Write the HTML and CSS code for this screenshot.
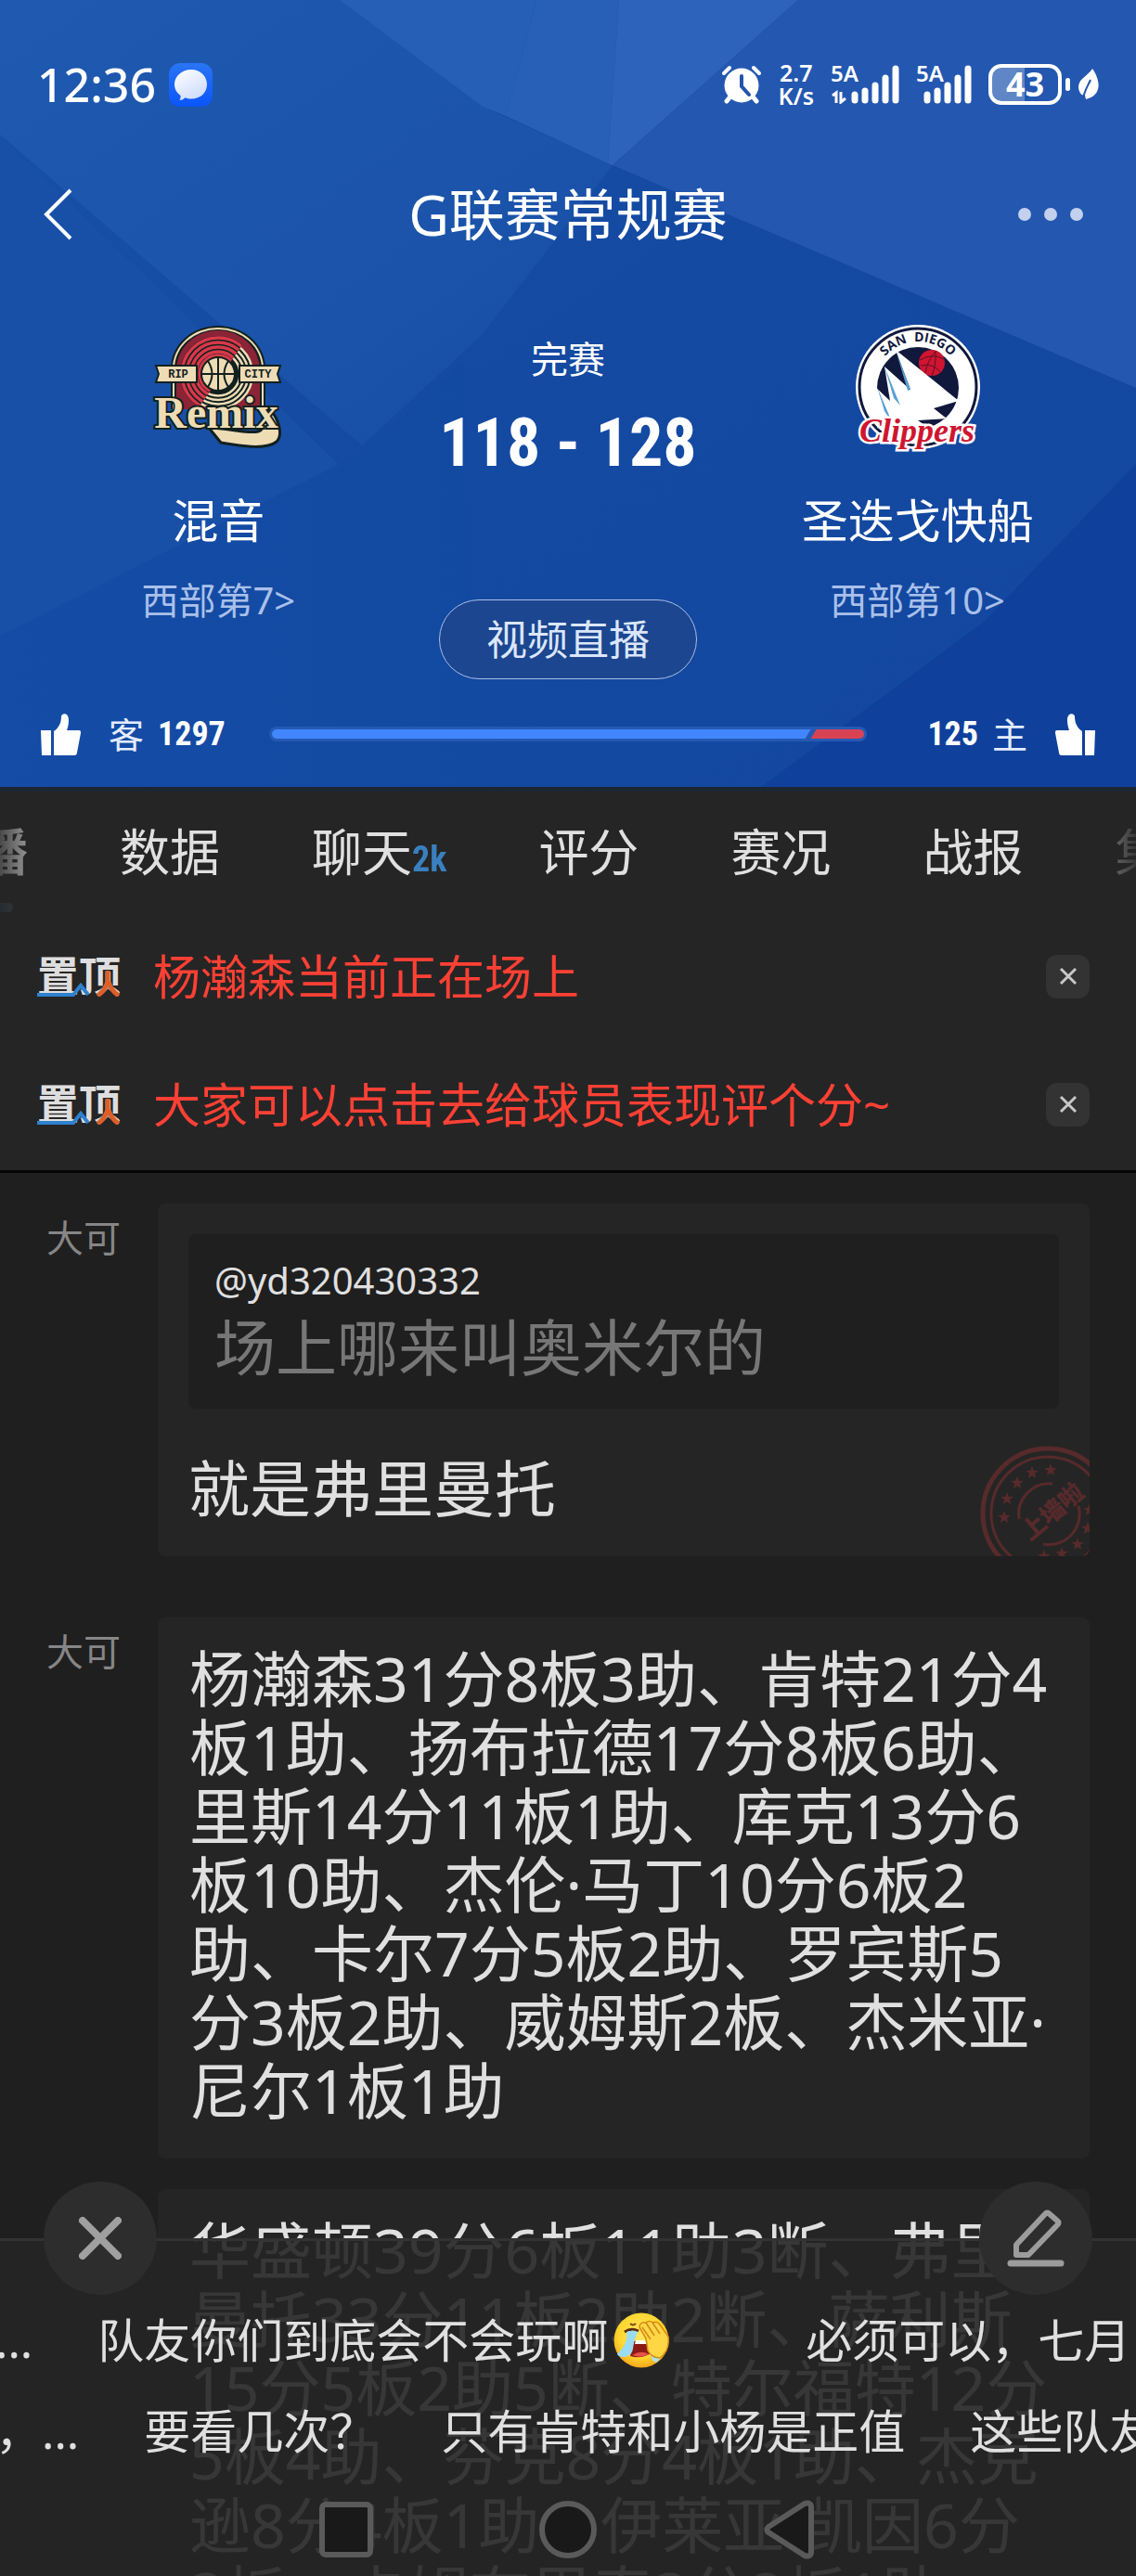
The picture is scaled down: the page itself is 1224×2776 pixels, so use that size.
FILE: index.html
```html
<!DOCTYPE html>
<html lang="zh-CN">
<head>
  <meta charset="UTF-8">
  <meta name="viewport" content="width=device-width, initial-scale=1.0">
  <title>G联赛常规赛</title>
  <link rel="stylesheet" href="styles.css">
</head>
<body>
  <div class="page">
    <header class="header">
      <svg class="header-bg" viewBox="0 0 1224 848" preserveAspectRatio="none" aria-hidden="true">
        <defs>
          <linearGradient id="base" x1="0" y1="0" x2="1" y2="1">
            <stop offset="0" stop-color="#1850a8"/>
            <stop offset=".45" stop-color="#144aa2"/>
            <stop offset="1" stop-color="#1347a0"/>
          </linearGradient>
          <linearGradient id="band" x1="0" y1="0" x2="1" y2="1">
            <stop offset="0" stop-color="#1f59b0"/>
            <stop offset=".6" stop-color="#1b54aa"/>
            <stop offset="1" stop-color="#154ca4"/>
          </linearGradient>
          <linearGradient id="fade" x1="0" y1="0" x2="1" y2="0">
            <stop offset="0" stop-color="#154ca6"/>
            <stop offset="1" stop-color="#1249a1"/>
          </linearGradient>
        </defs>
        <rect width="1224" height="848" fill="url(#base)"/>
        <path d="M0 145L385 520 0 685z" fill="#1850a8"/>
        <path d="M0 0H366L520 115 660 178 520 360 390 480 0 145z" fill="url(#band)"/>
        <path d="M0 685L385 490 500 390 520 848H0z" fill="url(#fade)"/>
        <path d="M366 0H578L545 125 520 115z" fill="#265fb6"/>
        <path d="M578 0H667L655 176 545 125z" fill="#2860b8"/>
        <path d="M667 0H860L660 178 655 176z" fill="#2e63bc"/>
        <path d="M860 0H1224V418L660 178z" fill="#2357b0"/>
        <path d="M1224 500L1060 670 820 848H1224z" fill="#0f419c"/>
      </svg>

      <div class="status">
        <div class="status-left">
          <span class="clock">12:36</span>
          <svg width="47" height="47" viewBox="0 0 47 47" aria-hidden="true">
            <defs>
              <linearGradient id="msg" x1="0" y1="0" x2="0" y2="1">
                <stop offset="0" stop-color="#2a74f5"/>
                <stop offset="1" stop-color="#0a55fb"/>
              </linearGradient>
              <linearGradient id="bubble" x1="0" y1="0" x2=".6" y2="1">
                <stop offset="0" stop-color="#fff"/>
                <stop offset="1" stop-color="#cfdcfb"/>
              </linearGradient>
            </defs>
            <rect width="47" height="47" rx="12" fill="url(#msg)"/>
            <path d="M24 7c10 0 17 7 17 16s-7 15.500-17 15.500c-2.500 0-4.500-.4-6.500-1.200-1.500 1.700-3.500 2.500-6 2.700 1-1.500 1.300-3.200 1-5C8.500 32 6 28 6 23 6 14 14 7 24 7z" fill="url(#bubble)"/>
          </svg>
        </div>
        <div class="status-right">
          <svg width="44" height="42" viewBox="0 0 44 42" aria-hidden="true">
            <g fill="none" stroke="#fff" stroke-linecap="round">
              <path d="M3 9l6-6M41 9l-6-6" stroke-width="4"/>
              <path d="M10 34l-4 5M34 34l4 5" stroke-width="5"/>
            </g>
            <circle cx="22" cy="22" r="18.500" fill="#fff"/>
            <path d="M22 12v11l8 9" fill="none" stroke="#2353ac" stroke-width="4" stroke-linecap="round"/>
          </svg>
          <span class="speed">2.7<br>K/s</span>
          <div class="signal">
            <span>5A</span>
            <svg width="74" height="42" viewBox="0 0 74 42" aria-hidden="true">
              <path d="M2 33l4-3v11M11 29v11l5-4" fill="none" stroke="#fff" stroke-width="3"/>
              <path d="M26 32v6M37 28v10M48 22v16M59 14v24M70 4v34" fill="none" stroke="#fff" stroke-width="7" stroke-linecap="round"/>
            </svg>
          </div>
          <div class="signal">
            <span>5A</span>
            <svg width="60" height="42" viewBox="0 0 60 42" aria-hidden="true">
              <path d="M12 32v6M23 28v10M34 22v16M45 14v24M56 4v34" fill="none" stroke="#fff" stroke-width="7" stroke-linecap="round"/>
            </svg>
          </div>
          <div class="battery"><span>43</span></div>
          <svg width="22" height="34" viewBox="0 0 22 34" aria-hidden="true">
            <path d="M15 0c5 7 8 16 6 22-2 7-7 9-13 11l-1-4C3 29 0 25 0 19 1 10 10 8 15 0z" fill="#fff"/>
            <path d="M13 12C10 19 6 24 5 33" fill="none" stroke="#2353ac" stroke-width="2"/>
          </svg>
        </div>
      </div>

      <div class="nav">
        <button class="icon-btn back" aria-label="返回">
          <svg width="34" height="56" viewBox="0 0 34 56"><path d="M30 2L4 28l26 26" fill="none" stroke="#fff" stroke-width="4"/></svg>
        </button>
        <h1>G联赛常规赛</h1>
        <button class="icon-btn more" aria-label="更多">
          <svg width="72" height="16" viewBox="0 0 72 16" fill="#c3d0ee"><circle cx="8" cy="8" r="7"/><circle cx="36" cy="8" r="7"/><circle cx="64" cy="8" r="7"/></svg>
        </button>
      </div>

      <div class="match">
        <div class="team">
          <svg class="logo" viewBox="0 0 136 136" role="img" aria-label="Rip City Remix">
            <defs>
              <clipPath id="redPart"><path d="M0 0H110L40 100 0 136z"/></clipPath>
            </defs>
            <path d="M17 92V48a51 46 0 0 1 102 0v44z" fill="#12211f"/>
            <path d="M19 92V48a49 44 0 0 1 98 0v44z" fill="#eedcb5"/>
            <path d="M21 92V48a47 42 0 0 1 94 0v44z" fill="#12211f"/>
            <path d="M23 92V50a45 43 0 0 1 90 0v42z" fill="#8b2437"/>
            <circle cx="68" cy="54" r="38" fill="#12211f"/>
            <g fill="none" stroke="#eedcb5" stroke-width="2.500">
              <circle cx="68" cy="54" r="37"/><circle cx="68" cy="54" r="32.500"/><circle cx="68" cy="54" r="28"/><circle cx="68" cy="54" r="23.500"/>
            </g>
            <g clip-path="url(#redPart)">
              <circle cx="68" cy="54" r="41" fill="#12211f"/>
              <g fill="none" stroke="#d8384a" stroke-width="3.400">
                <circle cx="68" cy="54" r="39"/><circle cx="68" cy="54" r="34"/><circle cx="68" cy="54" r="29"/><circle cx="68" cy="54" r="24"/><circle cx="68" cy="54" r="20"/>
              </g>
            </g>
            <circle cx="68" cy="54" r="18" fill="#eedcb5" stroke="#12211f" stroke-width="2"/>
            <path d="M68 36v36M50 54h36M57 40q9 14 0 28M79 40q-9 14 0 28" fill="none" stroke="#12211f" stroke-width="2"/>
            <path d="M1 45h44v18H1l3-9zM135 45H91v18h44l-3-9z" fill="#eedcb5" stroke="#12211f" stroke-width="2"/>
            <text x="25" y="58" class="remix-small">RIP</text>
            <text x="111" y="58" class="remix-small">CITY</text>
            <path d="M124 92c10 12 14 28 7 35-10 8-32 6-60 1L58 112c20 0 43 7 53 4 7-2 6-9 4-19z" fill="#eedcb5" stroke="#12211f" stroke-width="3"/>
            <text x="66" y="112" class="remix-word">Remix</text>
          </svg>
          <h2>混音</h2>
          <a href="#">西部第7&gt;</a>
        </div>

        <div class="middle">
          <span class="state">完赛</span>
          <strong class="score">118 - 128</strong>
          <button class="live-btn">视频直播</button>
        </div>

        <div class="team">
          <svg class="logo" viewBox="0 0 136 136" role="img" aria-label="San Diego Clippers">
            <defs>
              <path id="arc" d="M21 66a47 47 0 0 1 94 0"/>
              <clipPath id="inner"><circle cx="68" cy="68" r="45"/></clipPath>
            </defs>
            <circle cx="68" cy="68" r="67" fill="#fff"/>
            <circle cx="68" cy="68" r="63" fill="none" stroke="#10183c" stroke-width="3"/>
            <circle cx="68" cy="69" r="44" fill="#10183c"/>
            <circle cx="83" cy="42" r="14" fill="#cf1530"/>
            <path d="M70 39q14-8 26-1M76 53q2-14 12-24M83 56q5-12 4-27M71 45q14-3 21 7" fill="none" stroke="#5e1028"/>
            <g clip-path="url(#inner)">
              <path d="M44 28L112 83 85 91 99 102 68 104 78 111 20 113V66L38 83 32 46 60 71z" fill="#fff"/>
              <path d="M44 28l16 43-3 1zM32 46l17 42-7-8zM24 68l17 40-9-14z" fill="#5b9fd4"/>
            </g>
            <text><textPath href="#arc" startOffset="50%" class="sd-text">SAN&#160; DIEGO</textPath></text>
            <text x="67" y="127" class="clip-word">Clippers</text>
          </svg>
          <h2>圣迭戈快船</h2>
          <a href="#">西部第10&gt;</a>
        </div>
      </div>

      <div class="vote">
        <div class="vote-side">
          <button class="icon-btn" aria-label="支持客队">
            <svg width="43" height="45" viewBox="0 0 43 45" fill="#fff"><path d="M0 18h11v27H1zM14 45V19C20 15 22 9 22 3c1-4 8-4 8 4 0 5-1 8-2 11h13c2 0 2 1 2 3l-4 21c0 2-1 3-3 3z"/></svg>
          </button>
          <span class="vote-name">客</span>
          <strong>1297</strong>
        </div>
        <div class="vote-bar">
          <div class="vote-away" style="width: 91%"></div>
          <div class="vote-home"></div>
        </div>
        <div class="vote-side vote-right">
          <strong>125</strong>
          <span class="vote-name">主</span>
          <button class="icon-btn" aria-label="支持主队">
            <svg width="43" height="45" viewBox="0 0 43 45" fill="#fff"><path d="M43 18H32v27h10zM29 45V19C23 15 21 9 21 3c-1-4-8-4-8 4 0 5 1 8 2 11H2c-2 0-2 1-2 3l4 21c0 2 1 3 3 3z"/></svg>
          </button>
        </div>
      </div>
    </header>

    <div class="panel">
      <nav class="tabs">
        <a href="#" class="active">播</a>
        <a href="#">数据</a>
        <a href="#">聊天<span class="count">2k</span></a>
        <a href="#">评分</a>
        <a href="#">赛况</a>
        <a href="#">战报</a>
        <a href="#">集</a>
      </nav>

      <div class="pinned">
        <span class="badge">置顶
          <svg viewBox="0 0 90 44" aria-hidden="true"><path d="M0 42h39l8-10 8 10" fill="none" stroke="#2f80cf" stroke-width="4"/><path d="M76 16v12q-3 10-11 15M77 28q3 10 11 15" fill="none" stroke="#d9602a" stroke-width="5"/></svg>
        </span>
        <a href="#">杨瀚森当前正在场上</a>
        <button class="close" aria-label="关闭"><svg width="20" height="20" viewBox="0 0 20 20"><path d="M2 2l16 16M18 2L2 18" stroke="#c8c8c8" stroke-width="3"/></svg></button>
      </div>
      <div class="pinned">
        <span class="badge">置顶
          <svg viewBox="0 0 90 44" aria-hidden="true"><path d="M0 42h39l8-10 8 10" fill="none" stroke="#2f80cf" stroke-width="4"/><path d="M76 16v12q-3 10-11 15M77 28q3 10 11 15" fill="none" stroke="#d9602a" stroke-width="5"/></svg>
        </span>
        <a href="#">大家可以点击去给球员表现评个分~</a>
        <button class="close" aria-label="关闭"><svg width="20" height="20" viewBox="0 0 20 20"><path d="M2 2l16 16M18 2L2 18" stroke="#c8c8c8" stroke-width="3"/></svg></button>
      </div>
    </div>

    <main class="chat">
      <article class="message">
        <span class="author">大可</span>
        <div class="bubbles">
          <div class="bubble with-quote">
            <blockquote>
              <cite>@yd320430332</cite>
              <p>场上哪来叫奥米尔的</p>
            </blockquote>
            <p>就是弗里曼托</p>
            <svg class="stamp" viewBox="0 0 146 146" aria-hidden="true">
              <defs><path id="star" d="M0-7l1.800 4.800 5 .1-4 3.200 1.500 4.900L0 3.200l-4.300 2.800 1.500-4.900-4-3.200 5-.1z"/></defs>
              <g fill="none" stroke="#572a2b">
                <circle cx="73" cy="73" r="70" stroke-width="5"/>
                <circle cx="73" cy="73" r="61" stroke-width="3"/>
                <path d="M42 79a33 33 0 0 1 36-38M106 65a33 33 0 0 1-38 41" stroke-width="3"/>
              </g>
              <g fill="#572a2b">
                <use href="#star" x="26" y="77"/><use href="#star" x="29" y="57"/><use href="#star" x="40" y="40"/><use href="#star" x="56" y="29"/><use href="#star" x="76" y="26"/>
                <use href="#star" x="118" y="69"/><use href="#star" x="116" y="89"/><use href="#star" x="105" y="106"/><use href="#star" x="88" y="116"/><use href="#star" x="69" y="119"/>
              </g>
              <text x="78" y="84" transform="rotate(-40 73 73)" class="stamp-text">上墙啦</text>
            </svg>
          </div>
        </div>
      </article>

      <article class="message">
        <span class="author">大可</span>
        <div class="bubbles">
          <div class="bubble">
            <p>杨瀚森31分8板3助、肯特21分4板1助、扬布拉德17分8板6助、里斯14分11板1助、库克13分6板10助、杰伦·马丁10分6板2助、卡尔7分5板2助、罗宾斯5分3板2助、威姆斯2板、杰米亚·尼尔1板1助</p>
          </div>
          <div class="bubble">
            <p>华盛顿39分6板11助3断、弗里曼托33分11板2助2断、萨利斯15分5板2助5断、特尔福特12分5板4助、芬克8分4板1助、杰克逊8分4板1助、伊莱亚·凯因6分3板、卡姆布里奇3分2板1助</p>
          </div>
        </div>
      </article>
    </main>

    <footer class="dock">
      <button class="round round-left" aria-label="关闭弹幕">
        <svg width="46" height="46" viewBox="0 0 46 46"><path d="M4 4l38 38M42 4L4 42" stroke="#a0a0a0" stroke-width="8" stroke-linecap="round"/></svg>
      </button>
      <button class="round round-right" aria-label="发弹幕">
        <svg width="62" height="62" viewBox="0 0 62 62" fill="none" stroke="#9c9c9c"><path d="M10 38L41 5q2-3 5 0l8 7q3 2 0 5L23 49H10z" stroke-width="6" stroke-linejoin="round"/><path d="M4 58h54" stroke-width="7" stroke-linecap="round"/></svg>
      </button>

      <div class="barrage first">
        <span>...</span>
        <span class="with-emoji">队友你们到底会不会玩啊<svg width="60" height="60" viewBox="0 0 60 60" role="img" aria-label="捂脸哭">
            <defs>
              <radialGradient id="face" cx=".5" cy=".4" r=".6">
                <stop offset="0" stop-color="#ffe763"/>
                <stop offset=".7" stop-color="#ffd62e"/>
                <stop offset="1" stop-color="#f5a51b"/>
              </radialGradient>
            </defs>
            <circle cx="30" cy="30" r="29.500" fill="url(#face)"/>
            <path d="M18 12q3 3 6 0" fill="none" stroke="#8a4a12" stroke-width="2"/>
            <path d="M12 21q7-5 15-1" fill="none" stroke="#5a2c10" stroke-width="3"/>
            <path d="M22 31q8-2 14 1l6 11q-12 8-24 4z" fill="#8b1a16"/>
            <path d="M24 30h10l2 4H23z" fill="#fff"/>
            <path d="M20 46q10-6 18-1-8 5-18 1z" fill="#e65349"/>
            <path d="M14 21q8-3 12 0c-3 6-4 11-5 18-1 9-13 12-17 6 6-7 12-13 10-24z" fill="#9bdcf5"/>
            <path d="M40 43q3 8 12 5l-6 6q-6-2-6-11z" fill="#a9e3f2"/>
            <path d="M28 16l7 12 2 13q4 8 13 8 11-8 9-23l-9-13q-3-4-7-2-5-3-8 0-7-1-7 5z" fill="#ffd744" stroke="#d98a14" stroke-width="1.500"/>
            <path d="M35 11l9 14M42 11l8 12M31 16l9 13" fill="none" stroke="#d08a1a" stroke-width="1.500"/>
          </svg></span>
        <span>必须可以，七月</span>
      </div>
      <div class="barrage">
        <span>，...</span>
        <span>要看几次？</span>
        <span>只有肯特和小杨是正值</span>
        <span>这些队友</span>
      </div>

      <div class="system-nav">
        <button aria-label="最近任务"><svg width="60" height="66" viewBox="0 0 60 66"><rect x="4" y="6" width="52" height="54" rx="4"/></svg></button>
        <button aria-label="主屏幕"><svg width="66" height="66" viewBox="0 0 66 66"><circle cx="33" cy="33" r="28"/></svg></button>
        <button aria-label="返回"><svg width="60" height="66" viewBox="0 0 60 66"><path d="M46 5L7 30q-3 3 0 6l39 25q7 2 7-4V9q0-6-7-4z"/></svg></button>
      </div>
    </footer>
  </div>
</body>
</html>
```

FILE: styles.css
```css
* {
  margin: 0;
  padding: 0;
  box-sizing: border-box;
}

body {
  background: #1f1f1f;
  color: #e0e0e0;
  font-family: "Noto Sans", "Noto Sans CJK SC", sans-serif;
}

button {
  border: none;
  background: none;
  font-family: inherit;
  color: inherit;
  cursor: pointer;
}

a {
  color: inherit;
  text-decoration: none;
}

svg {
  display: block;
  flex-shrink: 0;
}

.page {
  position: relative;
  display: flex;
  flex-direction: column;
  height: 100vh;
  overflow: hidden;
}

/* header */
.header {
  position: relative;
  flex-shrink: 0;
  padding-bottom: 32px;
  border-bottom: 5px solid #1d2733;
  color: #fff;
}

.header-bg {
  position: absolute;
  inset: 0;
  z-index: -1;
  width: 100%;
  height: 100%;
}

.status {
  display: flex;
  justify-content: space-between;
  align-items: center;
  height: 182px;
  padding: 0 40px;
}

.status-left, .status-right {
  display: flex;
  align-items: center;
}

.status-left {
  gap: 14px;
}

.status-right {
  gap: 18px;
}

.clock {
  font-size: 50px;
  font-weight: 500;
  line-height: 64px;
}

.speed {
  font-size: 25px;
  font-weight: 600;
  line-height: 25px;
  text-align: center;
}

.signal {
  position: relative;
}

.signal span {
  position: absolute;
  left: 0;
  top: -3px;
  font-size: 24px;
  font-weight: 600;
  line-height: 24px;
}

.battery {
  position: relative;
  width: 79px;
  height: 44px;
  border: 4px solid #fff;
  border-radius: 14px;
  background: linear-gradient(90deg, rgba(255, 255, 255, 0.28) 50%, transparent 50%);
  text-align: center;
}

.battery span {
  display: block;
  font-size: 36px;
  font-weight: 700;
  line-height: 36px;
}

.battery::after {
  content: '';
  position: absolute;
  right: -13px;
  top: 11px;
  width: 5px;
  height: 14px;
  border-radius: 3px;
  background: #fff;
}

.nav {
  display: grid;
  grid-template-columns: 1fr auto 1fr;
  align-items: center;
  height: 100px;
  padding: 0 56px 2px;
}

.nav h1 {
  font-size: 60px;
  font-weight: 400;
  line-height: 80px;
}

.icon-btn {
  justify-self: start;
}

.nav .back {
  margin-left: -10px;
}

.nav .more {
  justify-self: end;
}

.match {
  display: grid;
  grid-template-columns: repeat(3, 1fr);
  padding: 67px 47px 0;
}

.team, .middle {
  display: flex;
  flex-direction: column;
  align-items: center;
}

.logo {
  width: 136px;
  height: 136px;
  overflow: visible;
}

.team h2 {
  margin: 46px 0 32px;
  font-size: 50px;
  font-weight: 400;
  line-height: 60px;
  white-space: nowrap;
}

.team a {
  color: #a9c0ea;
  font-size: 40px;
  line-height: 48px;
}

.remix-small {
  fill: #12211f;
  font: bold 12px "Liberation Mono", monospace;
  text-anchor: middle;
}

.remix-word {
  fill: #eedcb5;
  stroke: #12211f;
  stroke-width: 4px;
  paint-order: stroke;
  font: bold 48px "Liberation Serif", serif;
  text-anchor: middle;
}

.sd-text {
  fill: #10183c;
  font: bold 14px "Open Sans", sans-serif;
  text-anchor: middle;
}

.clip-word {
  fill: #cf1530;
  stroke: #fff;
  stroke-width: 5px;
  paint-order: stroke;
  font: italic bold 36px "Liberation Serif", serif;
  text-anchor: middle;
}

.state {
  margin-top: 14px;
  font-size: 40px;
  line-height: 48px;
}

.score, .vote strong, .count {
  font-family: "Roboto Condensed", "Liberation Sans Narrow", Roboto, sans-serif;
  font-weight: 700;
}

.score {
  margin-top: 27px;
  font-size: 72px;
  line-height: 80px;
  white-space: nowrap;
}

.live-btn {
  margin-top: 128px;
  padding: 0 50px;
  border: 1px solid #a9bfe6;
  border-radius: 43px;
  background: #1c468f;
  color: #dbe6fb;
  font-size: 44px;
  line-height: 84px;
}

.vote {
  display: flex;
  align-items: center;
  margin-top: 34px;
  padding: 0 44px;
}

.vote-side {
  display: flex;
  flex: 0 0 246px;
  align-items: center;
  height: 50px;
}

.vote-right {
  justify-content: flex-end;
}

.vote-name {
  margin: 0 15px 0 30px;
  color: #e3ecff;
  font-size: 38px;
  line-height: 48px;
}

.vote-right .vote-name {
  margin: 0 30px 0 15px;
}

.vote strong {
  font-size: 36px;
}

.vote-bar {
  display: flex;
  flex: 1;
  height: 16px;
  padding: 3px;
  border-radius: 8px;
  background: #255ab4;
}

.vote-away {
  border-radius: 5px 0 0 5px;
  background: #4186fc;
  clip-path: polygon(0 0, 100% 0, calc(100% - 6px) 100%, 0 100%);
}

.vote-home {
  flex: 1;
  border-radius: 0 5px 5px 0;
  background: #d84354;
  clip-path: polygon(6px 0, 100% 0, 100% 100%, 0 100%);
}

/* tabs and pinned notices */
.panel {
  flex-shrink: 0;
  padding-bottom: 2px;
  border-bottom: 3px solid #060606;
  background: #252525;
}

.tabs {
  position: relative;
  display: flex;
  gap: 99px;
  height: 130px;
  align-items: center;
  overflow: hidden;
  font-size: 54px;
  white-space: nowrap;
  -webkit-mask-image: linear-gradient(90deg, rgba(0, 0, 0, 0.2), #000 60px, #000 calc(100% - 90px), rgba(0, 0, 0, 0.1));
  mask-image: linear-gradient(90deg, rgba(0, 0, 0, 0.2), #000 60px, #000 calc(100% - 90px), rgba(0, 0, 0, 0.1));
}

.tabs a {
  flex-shrink: 0;
  line-height: 64px;
}

.tabs .active {
  margin-left: -24px;
  font-weight: 700;
}

.tabs .active::after {
  content: '';
  position: absolute;
  left: 0;
  bottom: 0;
  width: 14px;
  height: 10px;
  border-radius: 0 5px 5px 0;
  background: #3a4b56;
}

.count {
  color: #3a80bf;
  font-size: 38px;
  line-height: 38px;
}

.pinned {
  display: flex;
  align-items: center;
  height: 138px;
  padding: 0 50px 0 40px;
  color: #ff4034;
  font-size: 51px;
}

.pinned a {
  flex: 1;
  line-height: 60px;
}

.badge {
  position: relative;
  width: 90px;
  margin-right: 35px;
  color: #dedede;
  font-size: 45px;
  font-weight: 700;
  line-height: 44px;
  white-space: nowrap;
}

.badge svg {
  position: absolute;
  left: 0;
  top: 0;
  width: 90px;
  height: 44px;
}

.close {
  display: flex;
  justify-content: center;
  align-items: center;
  width: 47px;
  height: 47px;
  border-radius: 12px;
  background: #333;
}

/* chat */
.chat {
  flex: 1;
  min-height: 0;
  padding: 33px 50px 0;
  overflow: hidden;
}

.message {
  display: flex;
  margin-bottom: 66px;
}

.author {
  flex: 0 0 120px;
  padding-top: 12px;
  color: #868686;
  font-size: 40px;
  line-height: 50px;
}

.bubbles {
  display: flex;
  flex: 1;
  flex-direction: column;
  gap: 33px;
}

.bubble {
  position: relative;
  padding: 28px 40px 37px 34px;
  border-radius: 8px;
  background: #252525;
  overflow: hidden;
}

.bubble p {
  font-size: 66px;
  line-height: 74px;
}

.with-quote {
  padding: 33px 33px 37px;
}

blockquote {
  margin-bottom: 48px;
  padding: 22px 28px 30px;
  border-radius: 8px;
  background: #1f1f1f;
}

blockquote cite {
  display: block;
  margin-bottom: 6px;
  font-size: 40px;
  font-style: normal;
  line-height: 56px;
}

blockquote p {
  color: #777;
}

.stamp {
  position: absolute;
  right: -28px;
  bottom: -27px;
  width: 146px;
  height: 146px;
}

.stamp-text {
  fill: #572a2b;
  font: 900 26px "Noto Sans CJK SC", sans-serif;
  text-anchor: middle;
}

/* barrage over the end of the chat */
.dock {
  position: absolute;
  left: 0;
  right: 0;
  bottom: 0;
  padding-top: 58px;
  border-top: 3px solid #333;
  background: rgba(37, 37, 37, 0.9);
}

.round {
  position: absolute;
  top: -64px;
  display: flex;
  justify-content: center;
  align-items: center;
  width: 122px;
  height: 122px;
  border-radius: 50%;
  background: #2d2d2d;
}

.round-left {
  left: 47px;
}

.round-right {
  right: 47px;
}

.barrage {
  display: flex;
  gap: 70px;
  height: 98px;
  margin-left: -5px;
  align-items: center;
  overflow: hidden;
  font-size: 50px;
  line-height: 60px;
  white-space: nowrap;
}

.barrage span {
  flex-shrink: 0;
}

.barrage .with-emoji {
  display: flex;
  align-items: center;
  gap: 6px;
  padding-right: 77px;
}

.system-nav {
  display: flex;
  justify-content: center;
  gap: 176px;
  padding: 24px 0 17px;
}

.system-nav svg {
  fill: #191919;
  stroke: #5a5a5a;
  stroke-width: 6px;
}
```
